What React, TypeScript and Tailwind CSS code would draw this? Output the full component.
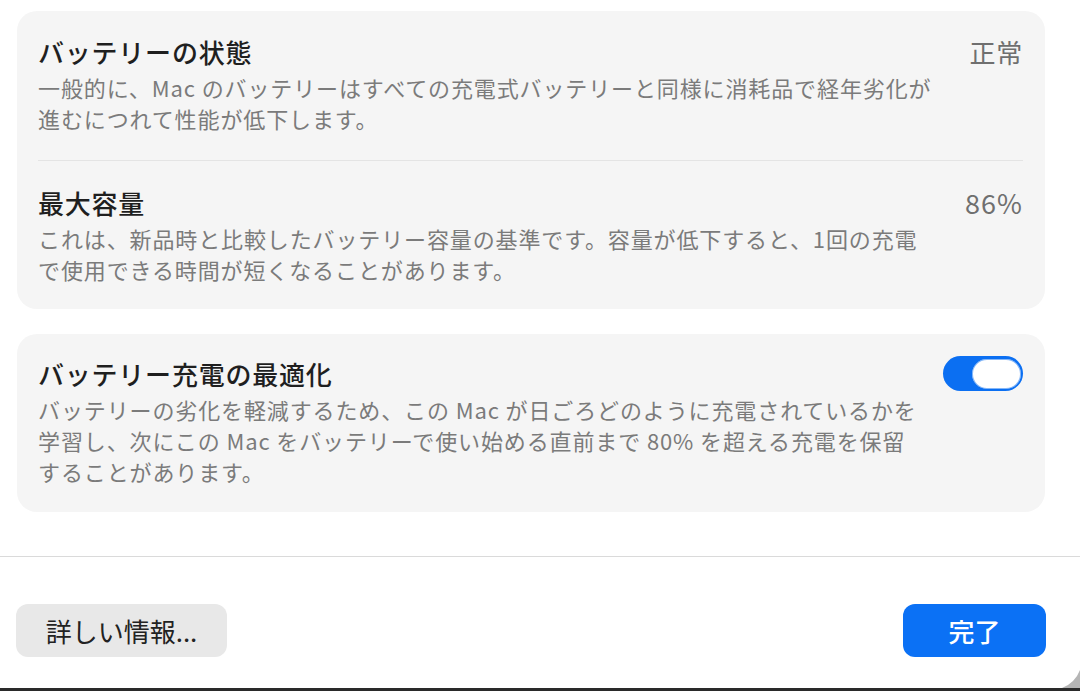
const FONT = '"Noto Sans CJK JP", "Noto Sans", sans-serif';

function Desc({ lines }: { lines: string[] }) {
  return (
    <div className="mt-[4px] text-[22px] leading-[31px] tracking-[0.04em] text-[#7b7b7b]">
      {lines.map((l, i) => (
        <div key={i} className="whitespace-nowrap">
          {l}
        </div>
      ))}
    </div>
  );
}

function Row({
  title,
  value,
  lines,
  className,
}: {
  title: string;
  value: React.ReactNode;
  lines: string[];
  className?: string;
}) {
  return (
    <div className={'flex items-start justify-between ' + (className ?? '')}>
      <div>
        <div className="text-[26px] leading-[32px] font-medium tracking-[0.03em] text-[#1f1f1f]">{title}</div>
        <Desc lines={lines} />
      </div>
      {value}
    </div>
  );
}

function Toggle() {
  return (
    <div className="mt-[-2px] flex h-[35px] w-[80px] items-center justify-end rounded-full bg-[#0b6ff2] pr-[2px]">
      <div className="h-[30px] w-[49px] rounded-full bg-white shadow-[inset_0_0_0_1px_rgba(11,111,242,0.5)]" />
    </div>
  );
}

export default function App() {
  return (
    <div className="relative flex h-[691px] w-[1080px] flex-col overflow-hidden bg-white" style={{ fontFamily: FONT }}>
      <div className="flex flex-col gap-[25px] pl-[17px] pr-[35px] pt-[11px]">
        <section className="rounded-[20px] bg-[#f5f5f5] pl-[21px] pr-[22px]">
          <Row
            className="pt-[25px] pb-[26px]"
            title="バッテリーの状態"
            value={<div className="text-[26px] leading-[32px] tracking-[0.03em] text-[#6f6f6f]">正常</div>}
            lines={[
              '一般的に、Mac のバッテリーはすべての充電式バッテリーと同様に消耗品で経年劣化が',
              '進むにつれて性能が低下します。',
            ]}
          />
          <div className="h-px bg-[#e4e4e4]" />
          <Row
            className="pt-[26px] pb-[24px]"
            title="最大容量"
            value={<div className="text-[27px] leading-[32px] tracking-[0.04em] text-[#6f6f6f]">86%</div>}
            lines={[
              'これは、新品時と比較したバッテリー容量の基準です。容量が低下すると、1回の充電',
              'で使用できる時間が短くなることがあります。',
            ]}
          />
        </section>

        <section className="rounded-[20px] bg-[#f5f5f5] pl-[21px] pr-[22px] pt-[24px] pb-[25px]">
          <Row
            title="バッテリー充電の最適化"
            value={<Toggle />}
            lines={[
              'バッテリーの劣化を軽減するため、この Mac が日ごろどのように充電されているかを',
              '学習し、次にこの Mac をバッテリーで使い始める直前まで 80% を超える充電を保留',
              'することがあります。',
            ]}
          />
        </section>
      </div>

      <div className="mt-[44px] h-px bg-[#dadada]" />

      <div className="flex items-center justify-between pl-[16px] pr-[34px] pt-[47px]">
        <button className="flex h-[53px] w-[211px] items-center justify-center rounded-[12px] bg-[#e8e8e8] text-[26px] text-[#222]">
          詳しい情報...
        </button>
        <button className="flex h-[53px] w-[143px] items-center justify-center rounded-[12px] bg-[#0b71f5] text-[26px] font-medium text-white">
          完了
        </button>
      </div>

      <div className="mt-auto h-[3px] bg-[#2a2a2a]" />
      <svg className="absolute bottom-[3px] right-0" width="18" height="18" viewBox="0 0 18 18">
        <path d="M18 0 L18 18 L0 18 Q13 13 18 0 Z" fill="#b5b5b5" />
      </svg>
    </div>
  );
}
